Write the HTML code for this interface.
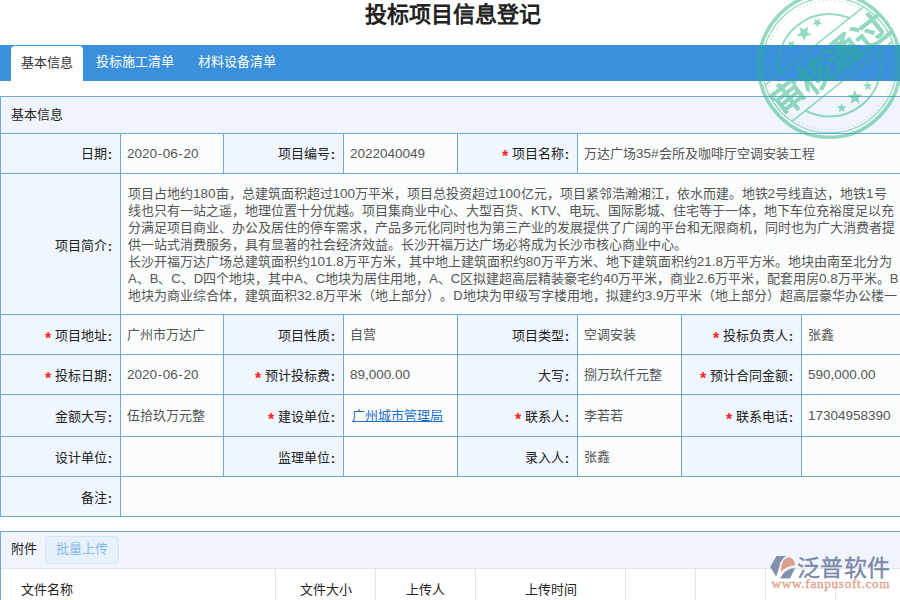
<!DOCTYPE html>
<html lang="zh-CN"><head><meta charset="utf-8"><style>
html,body{margin:0;padding:0}
body{width:900px;height:600px;overflow:hidden;position:relative;background:#fcfdfd;font-family:"Liberation Sans",sans-serif;font-size:13px;color:#222;text-spacing-trim:space-all}
.top{position:absolute;left:0;top:0;width:900px;height:45px;background:#fff}
.title{position:absolute;left:0;top:1px;width:906px;height:28px;line-height:28px;text-align:center;font-size:22px;font-weight:bold;color:#222}
.tabbar{position:absolute;left:0;top:45px;width:900px;height:36px;background:#3a90db}
.tab{position:absolute;top:0;height:36px;line-height:34px;color:#fff;font-size:13px}
.tab.act{background:#fcfdfd;color:#333;border-radius:4px 4px 0 0;top:1px;height:35px;line-height:33px}
.c{position:absolute;box-sizing:border-box;border-left:1px solid #71a8da;border-top:1px solid #71a8da;overflow:hidden;white-space:nowrap}
.l{background:#eff6fe;text-align:right;padding-right:8px;display:flex;align-items:center;justify-content:flex-end}
.v{background:#fbfdfd;color:#555;padding-left:6px;display:flex;align-items:center}
.l i{font-style:normal;color:#f22;font-size:16px;font-weight:bold;line-height:10px;margin-right:3.5px;position:relative;top:4px}
.l s{text-decoration:none;margin-left:1px;position:relative;top:2px;font-weight:bold;color:#222}
.v{padding-bottom:2px}
.v b{font-weight:normal;font-size:13.5px;position:relative;top:1px}
.v em{font-style:normal;margin:0 0.6px}
.dl b{font-weight:normal;font-size:13.5px}
.v u{color:#1f6fc5;text-decoration:underline;margin-left:2px}
.hdr{position:absolute;left:0;top:96px;width:1000px;height:37px;box-sizing:border-box;border-left:1px solid #71a8da;border-top:1px solid #71a8da;background:#f0f5fd;padding-left:10px;line-height:35px}
.bot{position:absolute;left:0;top:516px;width:1000px;height:1px;background:#71a8da}
.dl{position:absolute;left:128px;white-space:nowrap;color:#555;line-height:17px}
.att{position:absolute;left:0;top:531px;width:1000px;height:80px;box-sizing:border-box;border-left:1px solid #71a8da;border-top:1px solid #71a8da;background:#fff}
.atth{position:absolute;left:0;top:0;width:1000px;height:36px;background:#f0f5fd;border-bottom:1px solid #e3e8ee}
.btn{position:absolute;left:44px;top:4px;width:74px;height:28px;box-sizing:border-box;border:1px solid #d3e5f8;background:#e6f1fc;border-radius:4px;color:#86baec;text-align:center;line-height:23px;text-indent:-1px}
.th{position:absolute;top:37px;height:50px;box-sizing:border-box;border-right:1px solid #e6e6e6;line-height:42px}
</style></head><body>
<div class="top"></div>
<div class="title">投标项目信息登记</div>
<div class="tabbar">
<div class="tab act" style="left:11px;width:72px;text-align:center">基本信息</div>
<div class="tab" style="left:96px">投标施工清单</div>
<div class="tab" style="left:198px">材料设备清单</div>
</div>
<div class="hdr">基本信息</div>
<div class="c l" style="padding-bottom:2px;left:0px;top:133px;width:120px;height:40px">日期<s>:</s></div><div class="c v" style="left:120px;top:133px;width:103px;height:40px"><b>2020<em>-</em>06<em>-</em>20</b></div><div class="c l" style="padding-bottom:2px;left:223px;top:133px;width:120px;height:40px">项目编号<s>:</s></div><div class="c v" style="left:343px;top:133px;width:114px;height:40px"><b>2022040049</b></div><div class="c l" style="padding-bottom:2px;left:457px;top:133px;width:120px;height:40px"><i>*</i>项目名称<s>:</s></div><div class="c v" style="left:577px;top:133px;width:423px;height:40px">万达广场<b>35#</b>会所及咖啡厅空调安装工程</div><div class="c l" style="left:0px;top:314px;width:120px;height:40px"><i>*</i>项目地址<s>:</s></div><div class="c v" style="left:120px;top:314px;width:103px;height:40px">广州市万达广</div><div class="c l" style="left:223px;top:314px;width:120px;height:40px">项目性质<s>:</s></div><div class="c v" style="left:343px;top:314px;width:114px;height:40px">自营</div><div class="c l" style="left:457px;top:314px;width:120px;height:40px">项目类型<s>:</s></div><div class="c v" style="left:577px;top:314px;width:104px;height:40px">空调安装</div><div class="c l" style="left:681px;top:314px;width:120px;height:40px"><i>*</i>投标负责人<s>:</s></div><div class="c v" style="left:801px;top:314px;width:199px;height:40px">张鑫</div><div class="c l" style="left:0px;top:354px;width:120px;height:40px"><i>*</i>投标日期<s>:</s></div><div class="c v" style="left:120px;top:354px;width:103px;height:40px"><b>2020<em>-</em>06<em>-</em>20</b></div><div class="c l" style="left:223px;top:354px;width:120px;height:40px"><i>*</i>预计投标费<s>:</s></div><div class="c v" style="left:343px;top:354px;width:114px;height:40px"><b>89,000.00</b></div><div class="c l" style="left:457px;top:354px;width:120px;height:40px">大写<s>:</s></div><div class="c v" style="left:577px;top:354px;width:104px;height:40px">捌万玖仟元整</div><div class="c l" style="left:681px;top:354px;width:120px;height:40px"><i>*</i>预计合同金额<s>:</s></div><div class="c v" style="left:801px;top:354px;width:199px;height:40px"><b>590,000.00</b></div><div class="c l" style="left:0px;top:394px;width:120px;height:42px">金额大写<s>:</s></div><div class="c v" style="left:120px;top:394px;width:103px;height:42px">伍拾玖万元整</div><div class="c l" style="left:223px;top:394px;width:120px;height:42px"><i>*</i>建设单位<s>:</s></div><div class="c v" style="left:343px;top:394px;width:114px;height:42px"><u>广州城市管理局</u></div><div class="c l" style="left:457px;top:394px;width:120px;height:42px"><i>*</i>联系人<s>:</s></div><div class="c v" style="left:577px;top:394px;width:104px;height:42px">李若若</div><div class="c l" style="left:681px;top:394px;width:120px;height:42px"><i>*</i>联系电话<s>:</s></div><div class="c v" style="left:801px;top:394px;width:199px;height:42px"><b>17304958390</b></div><div class="c l" style="left:0px;top:436px;width:120px;height:40px">设计单位<s>:</s></div><div class="c v" style="left:120px;top:436px;width:103px;height:40px"></div><div class="c l" style="left:223px;top:436px;width:120px;height:40px">监理单位<s>:</s></div><div class="c v" style="left:343px;top:436px;width:114px;height:40px"></div><div class="c l" style="left:457px;top:436px;width:120px;height:40px">录入人<s>:</s></div><div class="c v" style="left:577px;top:436px;width:104px;height:40px">张鑫</div><div class="c l" style="left:681px;top:436px;width:120px;height:40px"></div><div class="c v" style="left:801px;top:436px;width:199px;height:40px"></div><div class="c l" style="left:0px;top:173px;width:120px;height:141px">项目简介<s>:</s></div><div class="c v" style="left:120px;top:173px;width:880px;height:141px"></div><div class="dl" style="top:185px">项目占地约<b>180</b>亩，总建筑面积超过<b>100</b>万平米，项目总投资超过<b>100</b>亿元，项目紧邻浩瀚湘江，依水而建。地铁<b>2</b>号线直达，地铁<b>1</b>号</div><div class="dl" style="top:202px">线也只有一站之遥，地理位置十分优越。项目集商业中心、大型百货、KTV、电玩、国际影城、住宅等于一体，地下车位充裕度足以充</div><div class="dl" style="top:219px">分满足项目商业、办公及居住的停车需求，产品多元化同时也为第三产业的发展提供了广阔的平台和无限商机，同时也为广大消费者提</div><div class="dl" style="top:236px">供一站式消费服务，具有显著的社会经济效益。长沙开福万达广场必将成为长沙市核心商业中心。</div><div class="dl" style="top:253px">长沙开福万达广场总建筑面积约<b>101.8</b>万平方米，其中地上建筑面积约<b>80</b>万平方米、地下建筑面积约<b>21.8</b>万平方米。地块由南至北分为</div><div class="dl" style="top:270px">A、B、C、D四个地块，其中A、C地块为居住用地，A、C区拟建超高层精装豪宅约<b>40</b>万平米，商业<b>2.6</b>万平米，配套用房<b>0.8</b>万平米。B</div><div class="dl" style="top:287px">地块为商业综合体，建筑面积<b>32.8</b>万平米（地上部分）。D地块为甲级写字楼用地，拟建约<b>3.9</b>万平米（地上部分）超高层豪华办公楼一</div><div class="c l" style="left:0px;top:476px;width:120px;height:40px">备注<s>:</s></div><div class="c v" style="left:120px;top:476px;width:880px;height:40px"></div>
<div class="bot"></div>
<div class="att">
<div class="atth"><span style="position:absolute;left:10px;top:0;line-height:34px">附件</span><div class="btn">批量上传</div></div>
<div class="th" style="left:0;width:275px;padding-left:20px">文件名称</div>
<div class="th" style="left:275px;width:100px;text-align:center">文件大小</div>
<div class="th" style="left:375px;width:100px;text-align:center">上传人</div>
<div class="th" style="left:475px;width:150px;text-align:center">上传时间</div>
<div class="th" style="left:625px;width:70px"></div>
<div class="th" style="left:695px;width:70px"></div>
<div class="th" style="left:765px;width:70px"></div>
</div>
<svg style="position:absolute;left:0;top:0" width="900" height="600" viewBox="0 0 900 600">
<defs>
<clipPath id="cc"><circle cx="0" cy="0" r="67"/></clipPath>
<mask id="nb" maskUnits="userSpaceOnUse" x="-100" y="-100" width="200" height="200"><rect x="-100" y="-100" width="200" height="200" fill="#fff"/><rect x="-100" y="-24.5" width="200" height="45.0" fill="#000"/></mask>
</defs>
<g opacity="0.5" fill="#2db487" stroke="#2db487">
<ellipse cx="829.5" cy="65.3" rx="70.8" ry="72" fill="none" stroke-width="3.6"/>
<ellipse cx="829.5" cy="65.3" rx="67" ry="67.6" fill="none" stroke-width="1.3"/>
<ellipse cx="829.5" cy="65.3" rx="64" ry="64.8" fill="none" stroke-width="1.1" stroke-dasharray="1 3" stroke-opacity="0.8"/>
<g transform="translate(829.5,65.3) rotate(-38.5)">
<circle r="51.2" fill="none" stroke-width="2" mask="url(#nb)"/>
<g clip-path="url(#cc)" stroke-width="1.6"><line x1="-80" y1="-24.5" x2="80" y2="-24.5"/><line x1="-80" y1="20.5" x2="80" y2="20.5"/></g>
<g stroke="none"><polygon points="0.00,-49.00 1.97,-43.72 7.61,-43.47 3.20,-39.96 4.70,-34.53 0.00,-37.64 -4.70,-34.53 -3.20,-39.96 -7.61,-43.47 -1.97,-43.72"/><polygon points="-17.00,-45.20 -15.72,-41.77 -12.05,-41.61 -14.92,-39.33 -13.94,-35.79 -17.00,-37.82 -20.06,-35.79 -19.08,-39.33 -21.95,-41.61 -18.28,-41.77"/><polygon points="17.00,-46.20 18.28,-42.77 21.95,-42.61 19.08,-40.33 20.06,-36.79 17.00,-38.82 13.94,-36.79 14.92,-40.33 12.05,-42.61 15.72,-42.77"/><polygon points="0.00,49.00 -1.97,43.72 -7.61,43.47 -3.20,39.96 -4.70,34.53 -0.00,37.64 4.70,34.53 3.20,39.96 7.61,43.47 1.97,43.72"/><polygon points="-17.00,46.20 -18.28,42.77 -21.95,42.61 -19.08,40.33 -20.06,36.79 -17.00,38.82 -13.94,36.79 -14.92,40.33 -12.05,42.61 -15.72,42.77"/><polygon points="17.00,45.20 15.72,41.77 12.05,41.61 14.92,39.33 13.94,35.79 17.00,37.82 20.06,35.79 19.08,39.33 21.95,41.61 18.28,41.77"/></g>
<text x="0.5" y="12" stroke-width="0.35" font-family="Liberation Sans" font-weight="700" font-size="35" letter-spacing="0" text-anchor="middle">审核通过</text>
</g></g></svg>
<svg style="position:absolute;left:0;top:0" width="900" height="600" viewBox="0 0 900 600">
<g opacity="0.95">
<path fill="#7d8cab" d="M776.4,556.1 L786.2,556.1 Q781,559.5 779.6,565.5 Q778.6,571 776.1,576.4 L770.2,566.9 Z"/>
<path fill="#dd9b85" d="M780.7,572.4 Q780.6,566 783.2,560.8 Q785.8,557.3 789.6,557.2 Q793.6,558.2 795.2,564.9 Q789.5,565.6 785,568.3 Q782.5,570 780.7,572.4 Z"/>
<path fill="#7d8cab" d="M780.2,578.6 L782.5,574.5 Q785,571 788.3,569.8 Q791.5,568.4 795.2,568.1 L789.9,578.6 Z"/>
</g>
<text x="796.5" y="576" font-family="Liberation Sans" font-size="23" letter-spacing="0.5" fill="#7a88a8" stroke="#7a88a8" stroke-width="0.35">泛普软件</text>
<text x="771.5" y="588" font-family="Liberation Serif" font-size="13.2" letter-spacing="0.7" fill="#e09f89" stroke="#e09f89" stroke-width="0.35">www.fanpusoft.com</text>
</svg>

</body></html>
